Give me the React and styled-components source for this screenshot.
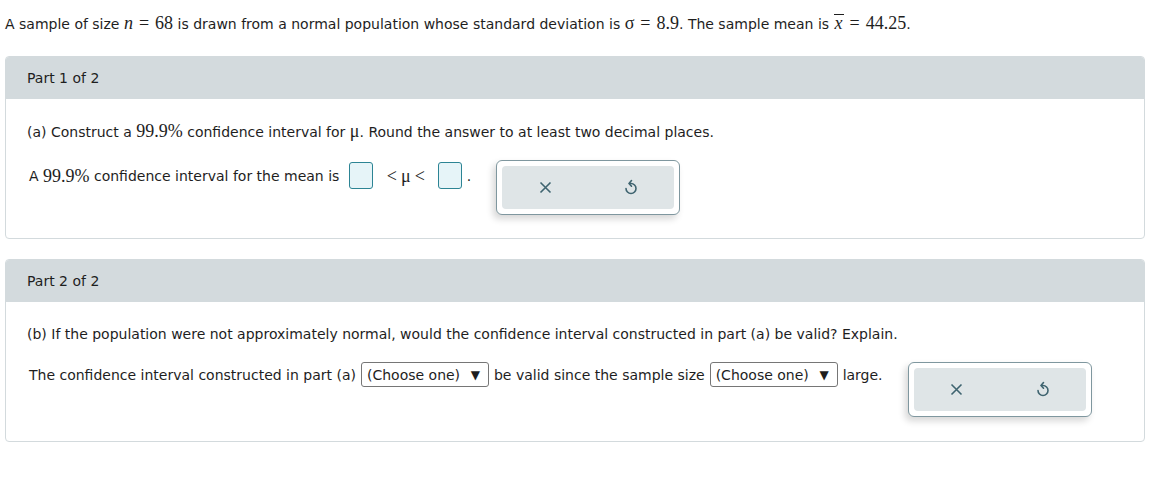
import React from "react";
import styled, { createGlobalStyle } from "styled-components";

const Global = createGlobalStyle`
  html, body { margin: 0; padding: 0; background: #fff; }
  body {
    font-family: "DejaVu Sans", Verdana, sans-serif;
    font-size: 14px;
    color: #1e1e1e;
  }
`;

const Page = styled.div`
  padding: 14px 22px 0 5px;
`;

const Statement = styled.p`
  margin: 0 0 22px 0;
  line-height: 20px;
  height: 20px;
`;

const M = styled.span`
  font-family: "Liberation Serif", "Times New Roman", serif;
  font-size: 18px;
  line-height: 1;
  font-style: ${(p) => (p.$italic ? "italic" : "normal")};
`;

const Op = styled.span`
  font-family: "Liberation Serif", "Times New Roman", serif;
  font-size: 18px;
  line-height: 1;
  margin-left: ${(p) => p.$ml ?? 6}px;
  margin-right: ${(p) => p.$mr ?? 6}px;
`;

const Bar = styled.span`
  display: inline-block;
  border-top: 1px solid #1e1e1e;
  line-height: 13px;
  padding: 2px 1px 0 1px;
  font-family: "Liberation Serif", "Times New Roman", serif;
  font-size: 18px;
  font-style: italic;
`;

const Card = styled.section`
  border: 1px solid #d3dadd;
  border-radius: 4px;
  overflow: hidden;
  margin-bottom: 20px;
`;

const CardHeader = styled.div`
  height: 42px;
  background: #d3dadd;
  display: flex;
  align-items: center;
  padding-left: 21px;
`;

const CardBody = styled.div`
  padding: ${(p) => p.$pt ?? 23}px 21px ${(p) => p.$pb ?? 23}px 21px;
`;

const Question = styled.p`
  margin: 0 0 18px 0;
  line-height: 20px;
  height: 20px;
`;

const AnswerRow = styled.div`
  display: flex;
  align-items: flex-start;
  gap: 25px;
  padding-left: 2px;
`;

const Sentence = styled.div`
  display: flex;
  align-items: center;
  margin-top: ${(p) => p.$top || 0}px;
  white-space: pre;
`;

const Box = styled.span`
  display: inline-block;
  width: 22px;
  height: 25px;
  border: 1px solid #2c8494;
  background: #e6f4f8;
  border-radius: 3px;
  margin-left: ${(p) => p.$ml || 0}px;
  margin-right: ${(p) => p.$mr || 0}px;
`;

const Select = styled.span`
  display: inline-flex;
  align-items: center;
  justify-content: space-between;
  box-sizing: border-box;
  width: 128px;
  height: 25px;
  border: 1px solid #767676;
  border-radius: 3px;
  padding: 0 8px 0 5px;
  margin: 0 5px;
  background: #fff;
`;

const Arrow = styled.span`
  font-size: 12px;
`;

const ToolFrame = styled.div`
  width: 172px;
  padding: 5px;
  border: 1px solid #7f979f;
  border-radius: 6px;
  background: #fff;
  box-shadow: -3px 4px 7px rgba(0, 0, 0, 0.16);
  flex-shrink: 0;
`;

const ToolInner = styled.div`
  display: grid;
  grid-template-columns: 1fr 1fr;
  height: 43px;
  background: #dfe5e7;
  border-radius: 4px;
`;

const ToolButton = styled.button`
  border: 0;
  background: transparent;
  display: flex;
  align-items: center;
  justify-content: center;
  padding: 0;
  cursor: pointer;
`;

const XIcon = () => (
  <svg width="13" height="13" viewBox="0 0 13 13">
    <path d="M1.5 1.5 L11.5 11.5 M11.5 1.5 L1.5 11.5" stroke="#3f6470" strokeWidth="1.6" fill="none" />
  </svg>
);

const UndoIcon = () => (
  <svg width="14" height="17" viewBox="0 0 14 17">
    <path d="M5.5 4.5 H7 A5 5 0 1 1 2 9.5" stroke="#3f6470" strokeWidth="1.6" fill="none" strokeLinecap="round" />
    <path d="M7.5 1.5 L5 4.5 L7.5 7.2" stroke="#3f6470" strokeWidth="1.6" fill="none" strokeLinecap="round" strokeLinejoin="round" />
  </svg>
);

const Tools = () => (
  <ToolFrame>
    <ToolInner>
      <ToolButton aria-label="clear"><XIcon /></ToolButton>
      <ToolButton aria-label="undo"><UndoIcon /></ToolButton>
    </ToolInner>
  </ToolFrame>
);

export default function App() {
  return (
    <>
      <Global />
      <Page>
        <Statement>
          A sample of size <M $italic>n</M><Op $ml={6}>=</Op><M>68</M> is drawn from a normal population whose standard
          deviation is <M>σ</M><Op>=</Op><M>8.9</M>. The sample mean is <Bar>x</Bar><Op>=</Op><M>44.25</M>.
        </Statement>

        <Card>
          <CardHeader>Part 1 of 2</CardHeader>
          <CardBody>
            <Question>
              (a) Construct a <M>99.9%</M> confidence interval for <M>μ</M>. Round the answer to at least two decimal places.
            </Question>
            <AnswerRow>
              <Sentence $top={2}>
                {"A "}<M>99.9%</M>{" confidence interval for the mean is "}
                <Box $ml={5} $mr={14} />
                <Op $ml={0} $mr={4}>{"<"}</Op><M>μ</M><Op $ml={4} $mr={0}>{"<"}</Op>
                <Box $ml={13} $mr={5} />
                {"."}
              </Sentence>
              <Tools />
            </AnswerRow>
          </CardBody>
        </Card>

        <Card>
          <CardHeader>Part 2 of 2</CardHeader>
          <CardBody $pt={22} $pb={24}>
            <Question>
              (b) If the population were not approximately normal, would the confidence interval constructed in part (a) be valid? Explain.
            </Question>
            <AnswerRow>
              <Sentence>
                {"The confidence interval constructed in part (a)"}
                <Select>(Choose one)<Arrow>▼</Arrow></Select>
                {"be valid since the sample size"}
                <Select>(Choose one)<Arrow>▼</Arrow></Select>
                {"large."}
              </Sentence>
              <Tools />
            </AnswerRow>
          </CardBody>
        </Card>
      </Page>
    </>
  );
}
